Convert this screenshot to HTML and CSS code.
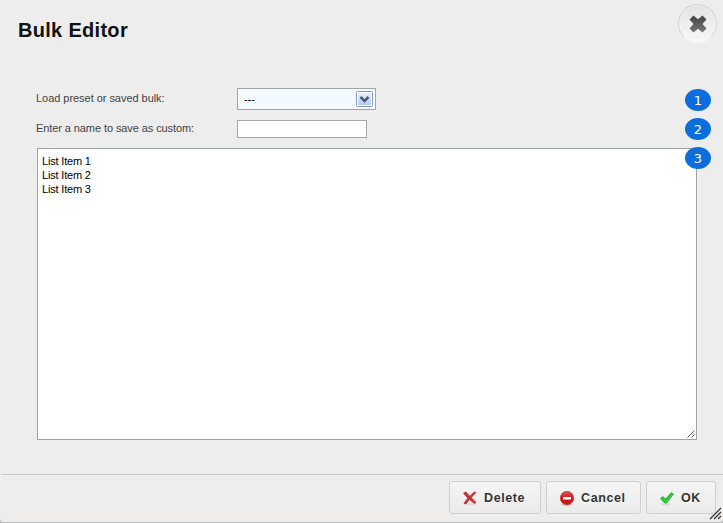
FILE: index.html
```html
<!DOCTYPE html>
<html lang="en">
<head>
<meta charset="utf-8">
<title>Bulk Editor</title>
<link rel="stylesheet" href="styles.css">
</head>
<body>
<div class="dialog">
  <header class="header">
    <h1 class="title">Bulk Editor</h1>
    <button class="close" aria-label="Close">
      <svg width="18" height="18" viewBox="0 0 18 18">
        <defs><linearGradient id="x" x1="0" y1="0" x2="0" y2="1"><stop offset="0" stop-color="#444"/><stop offset="1" stop-color="#777"/></linearGradient></defs>
        <path fill="url(#x)" d="M4.500.5 9 4.300 13.500.5 17.500 4.500 13.500 9l4 4.500-4 4L9 13.700l-4.500 3.800-4-4L4.500 9l-4-4.500Z"/>
      </svg>
    </button>
  </header>
  <main class="content">
    <div class="row preset">
      <label class="label"><span class="t-load">Load preset or saved bulk:</span></label>
      <div class="select"><span>---</span>
        <svg width="18" height="17" viewBox="0 0 18 17">
          <defs><linearGradient id="a" x1="0" y1="0" x2="0" y2="1"><stop offset="0" stop-color="#e8f0fc"/><stop offset="1" stop-color="#b4cbee"/></linearGradient></defs>
          <rect x="1.500" y=".5" width="16" height="15" rx="1" fill="#fff" stroke="#8199bd"/>
          <rect x="3" y="2" width="13" height="12" fill="url(#a)"/>
          <path d="M5.500 6 9.500 10l4-4" fill="none" stroke="#4b5a76" stroke-width="2.500"/>
        </svg>
      </div>
      <span class="badge">1</span>
    </div>
    <div class="row custom">
      <label class="label"><span class="t-name">Enter a name to save as custom:</span></label>
      <div class="input"></div>
      <span class="badge">2</span>
    </div>
    <div class="editor"><span>List Item 1</span><span>List Item 2</span><span>List Item 3</span>
      <span class="badge over">3</span>
      <svg class="grip" width="8" height="8" viewBox="0 0 8 8"><path d="M.5 7.500l7-7M4.500 7.500l3-3" stroke="#555" fill="none"/></svg>
    </div>
  </main>
  <footer class="footer">
    <button class="btn delete">
      <svg width="16" height="16" viewBox="0 0 16 16"><ellipse cx="8" cy="14.300" rx="6" ry="1" fill="#d8d8d8"/><path d="M1.500 3 4 2c2 2.500 6 6.500 10 10.500L12.500 13.500C8 10 4 6.500 1.500 3Z" fill="#d62e2e" stroke="#a92323" stroke-width=".7"/><path d="M12.500 2l1.500.5C10.500 6 7 9.500 4.500 13.500L2 13.500C4.500 9 8.500 5 12.500 2Z" fill="#d13434" stroke="#a92323" stroke-width=".7"/></svg>
      <span>Delete</span></button>
    <button class="btn cancel">
      <svg width="16" height="16" viewBox="0 0 16 16"><defs><linearGradient id="r" x1="0" y1="0" x2="0" y2="1"><stop offset="0" stop-color="#e5595b"/><stop offset=".5" stop-color="#c91618"/><stop offset="1" stop-color="#ca1c1c"/></linearGradient></defs><ellipse cx="8" cy="14.500" rx="6" ry="1.500" fill="#ccc"/><circle cx="8" cy="8" r="6.700" fill="url(#r)" stroke="#b92424" stroke-width=".6"/><rect x="4" y="7" width="8" height="2.500" fill="#fff"/></svg>
      <span>Cancel</span></button>
    <button class="btn ok">
      <svg width="16" height="16" viewBox="0 0 16 16"><ellipse cx="7" cy="14.300" rx="5" ry="1" fill="#d8d8d8"/><path d="M1.500 8.500 4 6.500 6.500 9l6-6.500 2 1.500L7.500 13h-2Z" fill="#30c83c" stroke="#26a33a" stroke-width=".8"/></svg>
      <span>OK</span></button>
    <svg class="resize" width="13" height="13" viewBox="0 0 13 13"><path d="M1 12 12 1M5 12l7-7M9 12l3-3" stroke="#333" stroke-width="1.200" fill="none"/></svg>
  </footer>
</div>
</body>
</html>
```
FILE: styles.css
```css
* { box-sizing: border-box; }
body { margin: 0; background: #bdbdbd; font-family: "Liberation Sans", Arial, sans-serif; }
.dialog { width: 723px; height: 522px; background: #ededed; display: flex; flex-direction: column; overflow: hidden; border-radius: 0 0 4px 4px; }
.header { height: 88px; display: flex; justify-content: space-between; align-items: flex-start; padding: 4px 6px 0 18px; }
.title { margin: 13px 0 0; font-size: 20px; line-height: 26px; color: #111; letter-spacing: .3px; }
.close { width: 39px; height: 39px; padding: 0; border: 1px solid #d4d4d4; border-bottom-color: #f4f4f4; border-radius: 50%; background: linear-gradient(#e3e3e3, #f8f8f8); display: flex; align-items: center; justify-content: center; box-shadow: 0 0 1px #fff, inset 0 0 2px #fff; }
.content { height: 386px; padding: 0 26px 0 37px; display: flex; flex-direction: column; font-size: 11px; }
.row { display: flex; align-items: flex-start; margin-right: -14px; }
.preset { height: 32px; }
.custom { height: 28px; }
.label { width: 200px; color: #444; line-height: 20px; white-space: nowrap; }
.custom .label { line-height: 16px; }
.t-load, .t-name { margin-left: -1px; letter-spacing: -.04px; }
.t-name { letter-spacing: -.09px; }
.select { width: 139px; height: 22px; border: 1px solid #9ca8a4; background: #f5faff; display: flex; align-items: center; justify-content: space-between; padding: 0 2px 0 6px; color: #000; }
.input { width: 130px; height: 18px; border: 1px solid #a5a9a8; background: #fff; }
.badge { width: 26px; height: 22px; border-radius: 50%; background: #0d6ddd; color: #fff; font: 13px/23px "DejaVu Sans", sans-serif; text-align: center; margin: 1px 0 0 auto; }
.custom .badge { margin-top: -2px; }
.editor { position: relative; width: 660px; height: 292px; background: #fff; border: 1px solid #9ca5a2; display: flex; flex-direction: column; padding: 5px 4px; line-height: 14px; color: #000; letter-spacing: -.18px; }
.over { position: absolute; right: -15px; top: -2px; margin: 0; letter-spacing: 0; }
.grip { position: absolute; right: 1px; bottom: 1px; }
.footer { position: relative; height: 48px; border-top: 1px solid #c8c8c8; background: #eeedeb; display: flex; justify-content: flex-end; gap: 5px; padding: 6px 7px 0; margin-left: 1px; }
.btn { height: 33px; border: 1px solid #d0d0d0; border-radius: 3px; background: linear-gradient(#f5f5f5, #ebebeb); padding: 0 0 0 12px; display: flex; align-items: center; gap: 6px; font: bold 12.5px/16px "Liberation Sans", Arial, sans-serif; letter-spacing: .6px; color: #333; text-shadow: 0 1px #fff; }
.delete { width: 92px; }
.cancel { width: 95px; }
.ok { width: 70px; }
.resize { position: absolute; right: 1px; bottom: 2px; }
```
